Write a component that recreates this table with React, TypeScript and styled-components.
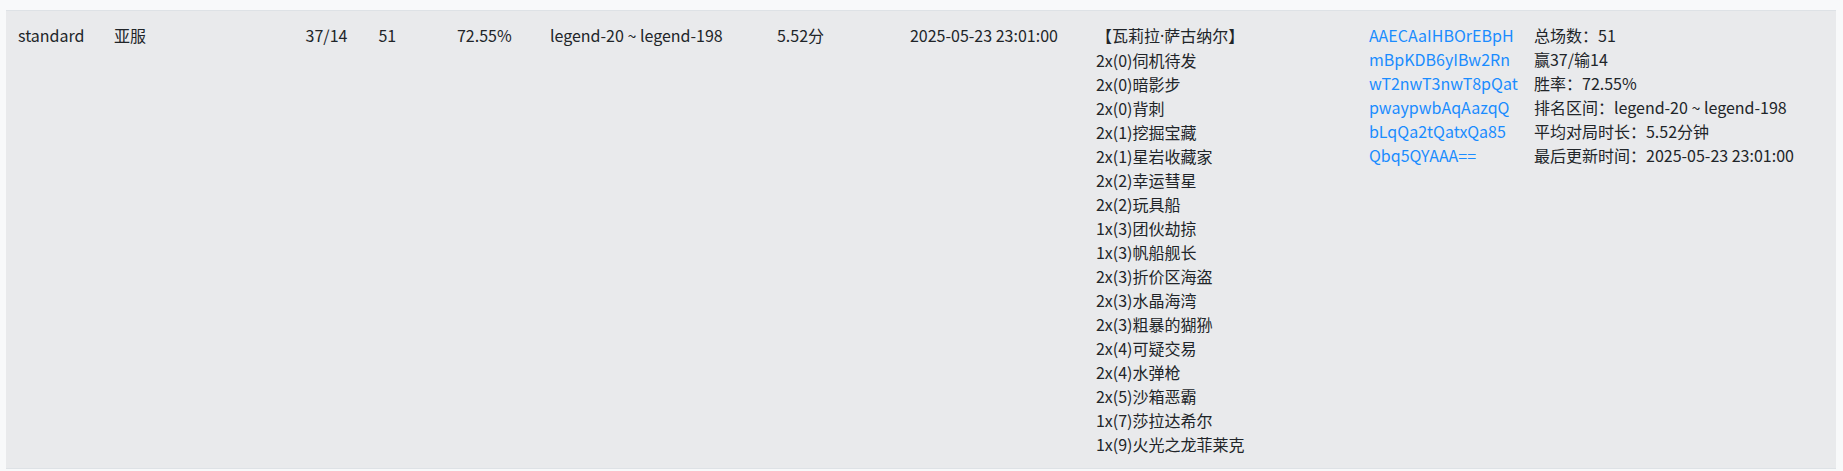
import React from 'react';
import styled, { createGlobalStyle } from 'styled-components';

const GlobalStyle = createGlobalStyle`
	html, body {
		margin: 0;
		padding: 0;
		background: #f8f9fa;
	}
	body {
		font-family: 'Noto Sans CJK SC', 'Noto Sans', sans-serif;
		font-size: 16px;
		color: #212529;
	}
`;

type Deck = {
	mode: string;
	region: string;
	record: string;
	games: number;
	winRate: string;
	rankRange: string;
	avgDuration: string;
	updatedAt: string;
	heroFirst: string;
	heroLast: string;
	cards: string[];
	codeLines: string[];
};

const deck: Deck = {
	mode: 'standard',
	region: '亚服',
	record: '37/14',
	games: 51,
	winRate: '72.55%',
	rankRange: 'legend-20 ~ legend-198',
	avgDuration: '5.52分',
	updatedAt: '2025-05-23 23:01:00',
	heroFirst: '瓦莉拉',
	heroLast: '萨古纳尔',
	cards: [
		'2x(0)伺机待发',
		'2x(0)暗影步',
		'2x(0)背刺',
		'2x(1)挖掘宝藏',
		'2x(1)星岩收藏家',
		'2x(2)幸运彗星',
		'2x(2)玩具船',
		'1x(3)团伙劫掠',
		'1x(3)帆船舰长',
		'2x(3)折价区海盗',
		'2x(3)水晶海湾',
		'2x(3)粗暴的猢狲',
		'2x(4)可疑交易',
		'2x(4)水弹枪',
		'2x(5)沙箱恶霸',
		'1x(7)莎拉达希尔',
		'1x(9)火光之龙菲莱克',
	],
	codeLines: [
		'AAECAaIHBOrEBpH',
		'mBpKDB6yIBw2Rn',
		'wT2nwT3nwT8pQat',
		'pwaypwbAqAazqQ',
		'bLqQa2tQatxQa85',
		'Qbq5QYAAA==',
	],
};

// column widths measured from the layout
const columns = [96, 191.6, 72.9, 78.5, 93, 227, 133, 186, 273, 165, 314];

const App: React.FC = () => {
	return (
		<Page>
			<GlobalStyle />
			<Table>
				<colgroup>
					{columns.map((w, i) => (
						<col key={i} style={{ width: w }} />
					))}
				</colgroup>
				<tbody>
					<Row>
						<Cell>{deck.mode}</Cell>
						<Cell>{deck.region}</Cell>
						<Cell>{deck.record}</Cell>
						<Cell>{deck.games}</Cell>
						<Cell>{deck.winRate}</Cell>
						<Cell>{deck.rankRange}</Cell>
						<Cell>{deck.avgDuration}</Cell>
						<Cell>{deck.updatedAt}</Cell>
						<Cell>
							<Line>
								【{deck.heroFirst}
								<Dot>·</Dot>
								{deck.heroLast}】
							</Line>
							{deck.cards.map((c) => (
								<Line key={c}>{c}</Line>
							))}
						</Cell>
						<Cell>
							<CodeLink href="#">
								{deck.codeLines.map((l) => (
									<Line key={l}>{l}</Line>
								))}
							</CodeLink>
						</Cell>
						<Cell>
							<Line>总场数：{deck.games}</Line>
							<Line>赢37/输14</Line>
							<Line>胜率：{deck.winRate}</Line>
							<Line>排名区间：{deck.rankRange}</Line>
							<Line>平均对局时长：5.52分钟</Line>
							<Line>最后更新时间：{deck.updatedAt}</Line>
						</Cell>
					</Row>
				</tbody>
			</Table>
		</Page>
	);
};

export default App;

const Page = styled.div`
	padding: 10px 7px 0 6px;
	min-height: 471px;
	box-sizing: border-box;
`;

const Table = styled.table`
	width: 1830px;
	table-layout: fixed;
	border-collapse: collapse;
	font-size: 16px;
`;

const Row = styled.tr`
	background: #e9eaec;
	border-top: 1px solid #dee2e6;
	border-bottom: 1px solid #dee2e6;
`;

const Cell = styled.td`
	vertical-align: top;
	padding: 12px;
	line-height: 24px;
	white-space: nowrap;
	text-align: left;
`;

const Line = styled.div`
	display: block;
	line-height: 24px;
`;

const Dot = styled.span`
	font-family: 'Noto Sans', sans-serif;
`;

const CodeLink = styled.a`
	display: block;
	color: #1a8cff;
	text-decoration: none;
	&:hover {
		text-decoration: underline;
	}
`;
